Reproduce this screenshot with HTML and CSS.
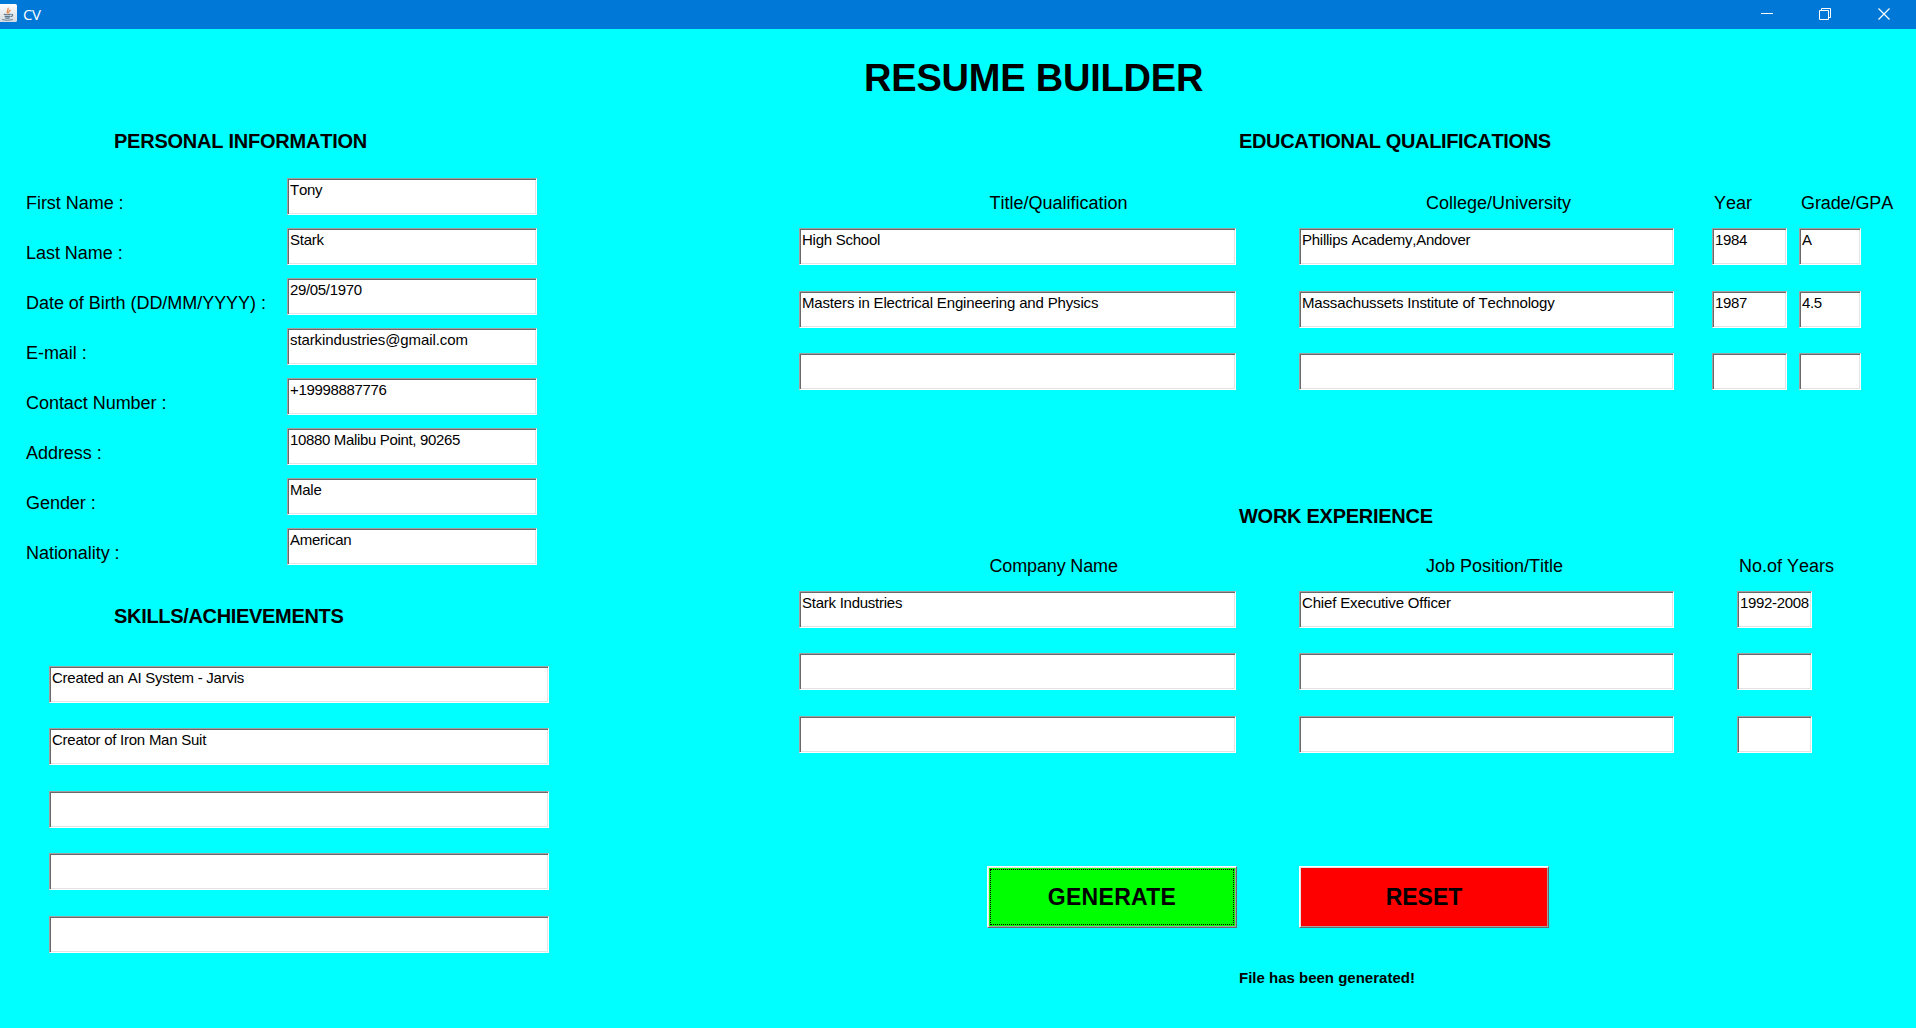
FILE: index.html
```html
<!DOCTYPE html>
<html lang="en">
<head>
<meta charset="utf-8">
<title>CV</title>
<link rel="stylesheet" href="styles.css">
</head>
<body>
<header class="titlebar">
  <svg class="app-icon" width="18" height="20" viewBox="0 0 18 20">
    <defs><linearGradient id="tile" x1="0" y1="0" x2="0" y2="1"><stop offset="0" stop-color="#fdfdfd"/><stop offset="1" stop-color="#d5dbe0"/></linearGradient></defs>
    <path d="M0 0h15.500q1.500 0 1.500 1.500v15q0 1.500-1.500 1.500H0z" fill="url(#tile)"/>
    <path d="M7.600 9.500C5.800 7.700 8.900 6.600 8 3.800M8.800 9.300c-1-1.400.6-2.200 1.700-3.300" fill="none" stroke="#e5833f" stroke-width="1.200"/>
    <path d="M3.800 10.300q3.500 1 7 0M4.600 12.200q2.900.9 5.800 0M5.200 13.900q2.200.6 4.500 0M11.300 10.200q2 0 1.200 1.400-.5.800-1.700 1.100" fill="none" stroke="#55758f" stroke-width="1.100"/>
    <path d="M2.200 15.500q5.200 1.500 10.600 0" fill="none" stroke="#6b8499" stroke-width="1.200"/>
  </svg>
  <span class="caption">CV</span>
  <div class="window-controls">
    <svg width="12" height="12" viewBox="0 0 12 12"><path d="M0 5.500h12"/></svg>
    <svg width="12" height="12" viewBox="0 0 12 12"><path d="M.5 2.500h9v9h-9zM2.500 2.500v-2h9v9h-2"/></svg>
    <svg width="12" height="12" viewBox="0 0 12 12"><path class="cross" d="M.5.500l11 11M11.500.500l-11 11"/></svg>
  </div>
</header>
<main class="frame">
  <h1 class="app-title">RESUME BUILDER</h1>

  <div class="left">
    <h2 class="heading personal">PERSONAL INFORMATION</h2>
    <div class="details">
      <span class="label">First Name :</span><div class="field">Tony</div>
      <span class="label">Last Name :</span><div class="field">Stark</div>
      <span class="label">Date of Birth (DD/MM/YYYY) :</span><div class="field numeric">29/05/1970</div>
      <span class="label">E-mail :</span><div class="field email">starkindustries@gmail.com</div>
      <span class="label">Contact Number :</span><div class="field numeric">+19998887776</div>
      <span class="label">Address :</span><div class="field numeric">10880 Malibu Point, 90265</div>
      <span class="label">Gender :</span><div class="field">Male</div>
      <span class="label">Nationality :</span><div class="field">American</div>
    </div>
    <h2 class="heading skills-heading">SKILLS/ACHIEVEMENTS</h2>
    <div class="skills">
      <div class="field">Created an AI System - Jarvis</div>
      <div class="field">Creator of Iron Man Suit</div>
      <div class="field"></div>
      <div class="field"></div>
      <div class="field"></div>
    </div>
  </div>

  <div class="right">
    <h2 class="heading education-heading">EDUCATIONAL QUALIFICATIONS</h2>
    <div class="columns education">
      <span class="column-title">Title/Qualification</span>
      <span class="column-title">College/University</span>
      <span class="column-title">Year</span>
      <span class="column-title">Grade/GPA</span>
    </div>
    <div class="columns rows education">
      <div class="field">High School</div><div class="field">Phillips Academy,Andover</div><div class="field numeric">1984</div><div class="field">A</div>
      <div class="field long">Masters in Electrical Engineering and Physics</div><div class="field long">Massachussets Institute of Technology</div><div class="field numeric">1987</div><div class="field numeric">4.5</div>
      <div class="field"></div><div class="field"></div><div class="field"></div><div class="field"></div>
    </div>

    <h2 class="heading work-heading">WORK EXPERIENCE</h2>
    <div class="columns work">
      <span class="column-title company">Company Name</span>
      <span class="column-title">Job Position/Title</span>
      <span class="column-title">No.of Years</span>
    </div>
    <div class="columns rows work">
      <div class="field">Stark Industries</div><div class="field long">Chief Executive Officer</div><div class="field numeric">1992-2008</div>
      <div class="field"></div><div class="field"></div><div class="field"></div>
      <div class="field"></div><div class="field"></div><div class="field"></div>
    </div>

    <div class="actions">
      <button class="button generate"><span class="focus-ring">GENERATE</span></button>
      <button class="button reset">RESET</button>
    </div>
    <p class="message">File has been generated!</p>
  </div>
</main>
</body>
</html>
```
FILE: styles.css
```css
* {
  box-sizing: border-box;
}

body {
  margin: 0;
  height: 1028px;
  overflow: hidden;
  background: #00ffff;
  color: #000;
  font-family: "Liberation Sans", Arial, sans-serif;
  font-kerning: none;
  font-variant-ligatures: none;
  white-space: nowrap;
}

h1, h2, p {
  margin: 0;
}

.titlebar {
  display: flex;
  align-items: center;
  height: 29px;
  padding-right: 26px;
  background: #0078d7;
}

.app-icon {
  margin-top: -1px;
}

.caption {
  margin: -2px 0 0 5px;
  color: #fff;
  font: 15px/20px "Open Sans", "Noto Sans", sans-serif;
  letter-spacing: -0.5px;
}

.window-controls {
  display: flex;
  gap: 47px;
  margin: -1px 0 0 auto;
}

.window-controls svg:first-child {
  margin-right: -1px;
}

.window-controls path {
  fill: none;
  stroke: #fff;
}

.window-controls .cross {
  stroke-width: 1.2;
}

.frame {
  display: grid;
  grid-template-columns: 799px 1fr;
}

.app-title {
  grid-column: 1 / -1;
  padding: 27px 0 0 864px;
  font-size: 38px;
  letter-spacing: -0.2px;
  line-height: 44px;
}

.left,
.right {
  padding-top: 29px;
}

.heading {
  font-size: 20px;
  line-height: 24px;
}

.personal {
  margin-left: 114px;
  letter-spacing: -0.24px;
}

.details {
  display: grid;
  grid-template-columns: 261px 250px;
  row-gap: 13px;
  margin: 25px 0 0 26px;
}

.label,
.column-title {
  font-size: 18px;
  line-height: 24px;
}

.label {
  height: 37px;
  padding-top: 13px;
  letter-spacing: -0.04px;
}

.field {
  height: 37px;
  padding: 2px;
  border: 1px solid;
  border-color: #a0a0a0 #fff #fff #a0a0a0;
  background: #fff;
  box-shadow: inset 1px 1px #696969, inset -1px -1px #e3e3e3;
  font-size: 15px;
  letter-spacing: -0.25px;
  line-height: 17px;
}

.field.long {
  letter-spacing: -0.16px;
}

.field.email {
  letter-spacing: -0.1px;
}

.field.numeric {
  letter-spacing: -0.34px;
}

.skills-heading {
  margin: 39px 0 0 114px;
  letter-spacing: -0.32px;
}

.skills {
  display: grid;
  width: 500px;
  row-gap: 25.5px;
  margin: 37.6px 0 0 49px;
}

.education-heading {
  margin-left: 440px;
  letter-spacing: -0.36px;
}

.columns {
  display: grid;
}

/* Each track holds a field and the space to its right. */
.education {
  grid-template-columns: 500px 413px 87px 62px;
}

.work {
  grid-template-columns: 500px 438px 75px;
}

.rows {
  row-gap: 25.5px;
}

.rows.education {
  margin-top: 13.1px;
}

.rows.work {
  margin-top: 12.6px;
}

.education .field:nth-child(4n + 1),
.work .field:nth-child(3n + 1),
.work .field:nth-child(3n + 2) {
  margin-right: 63px;
}

.education .field:nth-child(4n + 2) {
  margin-right: 38px;
}

.education .field:nth-child(4n + 3) {
  margin-right: 12px;
}

.heading + .education {
  margin-top: 38px;
}

.heading + .work {
  margin-top: 26px;
}

.column-title:nth-child(1) {
  padding-left: 190.5px;
}

.column-title:nth-child(2) {
  padding-left: 127px;
}

.column-title:nth-child(3) {
  padding-left: 2px;
}

.column-title:nth-child(4) {
  padding-left: 2px;
  letter-spacing: -0.1px;
}

.company {
  letter-spacing: -0.15px;
}

.work-heading {
  margin: 113.9px 0 0 440px;
  letter-spacing: -0.27px;
}

.actions {
  display: flex;
  gap: 62px;
  margin: 113.4px 0 0 188px;
}

.button {
  width: 250px;
  height: 62px;
  padding: 1px;
  border: 1px solid;
  border-color: #fff #696969 #696969 #fff;
  box-shadow: inset 1px 1px #e3e3e3, inset -1px -1px #a0a0a0;
  color: #000;
  font: bold 23px/26px "Liberation Sans", Arial, sans-serif;
}

.generate {
  background: #00ff00;
}

.reset {
  background: #ff0000;
}

.focus-ring {
  display: flex;
  align-items: center;
  justify-content: center;
  height: 56px;
  margin: 0 1px;
  border: 1px dotted #000;
  letter-spacing: 0.3px;
}

.message {
  margin: 40px 0 0 440px;
  font-size: 15px;
  font-weight: bold;
  line-height: 20px;
}
```
